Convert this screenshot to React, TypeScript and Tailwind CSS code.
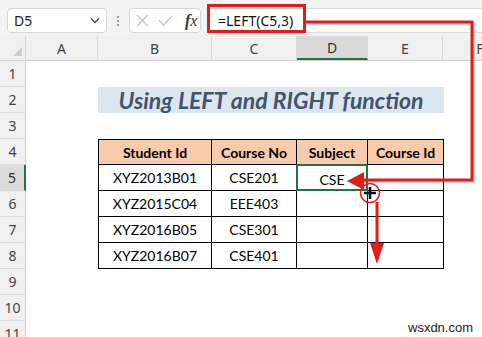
import React from "react";

const rows = [
  ["XYZ2013B01", "CSE201", "CSE", ""],
  ["XYZ2015C04", "EEE403", "", ""],
  ["XYZ2016B05", "CSE301", "", ""],
  ["XYZ2016B07", "CSE401", "", ""],
];

export default function App() {
  const ui = { fontFamily: '"Noto Sans", "Open Sans", sans-serif' };
  const cell = { fontFamily: 'Lato, "Liberation Sans", sans-serif' };
  return (
    <div className="relative w-[482px] h-[337px] overflow-hidden bg-white" style={ui}>
      {/* formula bar */}
      <div className="flex items-start h-[36px] bg-[#f3f3f3] pt-[8px] pl-[7px]">
        <div className="shrink-0 w-[100px] h-[25px] rounded-[4px] border border-[#d6d6d6] bg-white flex items-center justify-between pl-[6px] pr-[6px]">
          <span className="text-[14px] text-[#222] leading-none">D5</span>
          <svg width="10" height="7" viewBox="0 0 10 7">
            <path d="M1 1.5 L5 5.5 L9 1.5" fill="none" stroke="#444" strokeWidth="1.3" />
          </svg>
        </div>
        <div className="shrink-0 w-[22px] h-[25px] flex items-center justify-center">
          <svg width="4" height="12" viewBox="0 0 4 12">
            <circle cx="2" cy="2" r="1.1" fill="#8a8a8a" />
            <circle cx="2" cy="6" r="1.1" fill="#8a8a8a" />
            <circle cx="2" cy="10" r="1.1" fill="#8a8a8a" />
          </svg>
        </div>
        <div className="shrink-0 w-[72px] h-[25px] rounded-[4px] border border-[#d6d6d6] bg-white flex items-center pl-[6px] gap-[9px]">
          <svg width="13" height="13" viewBox="0 0 13 13">
            <path d="M1 1 L12 12 M12 1 L1 12" stroke="#c4c4c4" strokeWidth="1.2" />
          </svg>
          <svg width="15" height="11" viewBox="0 0 15 11">
            <path d="M1 5 L5.5 10 L14 1" fill="none" stroke="#c4c4c4" strokeWidth="1.2" />
          </svg>
          <span className="ml-[3px] text-[16px] italic text-[#333] leading-none" style={{ fontFamily: '"Liberation Serif", serif' }}>
            <b>f</b>x
          </span>
        </div>
        <div className="ml-[6px] flex-1 h-[25px] bg-white border-y border-[#dcdcdc] flex items-center pl-[11px]">
          <span className="text-[14px] text-[#111] leading-none">=LEFT(C5,3)</span>
        </div>
      </div>

      {/* column headers */}
      <div className="flex h-[25px] bg-[#f0f0f0] border-b border-[#cfcfcf]">
        <div className="shrink-0 w-[26px] h-full border-r border-[#d6d6d6] relative">
          <svg className="absolute right-[3px] bottom-[4px]" width="9" height="9" viewBox="0 0 9 9">
            <path d="M9 0 L9 9 L0 9 Z" fill="#cfcfcf" />
          </svg>
        </div>
        <div className="shrink-0 w-[72px] border-r border-[#dadada] flex items-center justify-center text-[14px] text-[#444]">A</div>
        <div className="shrink-0 w-[114px] border-r border-[#dadada] flex items-center justify-center text-[14px] text-[#444]">B</div>
        <div className="shrink-0 w-[85px] border-r border-[#dadada] flex items-center justify-center text-[14px] text-[#444]">C</div>
        <div className="shrink-0 w-[71px] border-r border-[#dadada] bg-[#d9d9d9] border-b-2 border-b-[#217346] flex items-center justify-center text-[14px] text-[#333]">D</div>
        <div className="shrink-0 w-[75px] border-r border-[#dadada] flex items-center justify-center text-[14px] text-[#444]">E</div>
        <div className="shrink-0 w-[74px] flex items-center justify-center text-[14px] text-[#444]">F</div>
      </div>

      {/* sheet */}
      <div className="flex">
        <div className="shrink-0 w-[26px] flex flex-col">
          {[1, 2, 3, 4, 5, 6, 7, 8, 9, 10, 11].map((n) => (
            <div
              key={n}
              className={
                n === 5
                  ? "h-[26px] bg-[#dcdcdc] border-r-2 border-[#217346] border-b border-b-[#d6d6d6] flex items-center justify-center text-[14px] text-[#333]"
                  : "h-[26px] bg-[#f0f0f0] border-r border-[#d0d0d0] border-b border-b-[#dadada] flex items-center justify-center text-[14px] text-[#444]"
              }
            >
              {n}
            </div>
          ))}
        </div>
        <div className="flex-1 flex flex-col" style={cell}>
          <div className="h-[26px]" />
          <div className="h-[26px] flex">
            <div className="shrink-0 w-[72px]" />
            <div className="shrink-0 w-[346px] h-[26px] bg-[#dce6f1] flex items-center justify-center text-[23px] font-bold italic text-[#44546a] leading-none">
              Using LEFT and RIGHT function
            </div>
          </div>
          <div className="h-[26px]" />
          <div className="flex">
            <div className="shrink-0 w-[72px]" />
            <div className="flex flex-col border-l border-t border-black">
              <div className="flex h-[25px] bg-[#f8cbad] text-[14px] font-bold text-black">
                <div className="shrink-0 w-[113px] border-r border-b border-black flex items-center justify-center">Student Id</div>
                <div className="shrink-0 w-[85px] border-r border-b border-black flex items-center justify-center">Course No</div>
                <div className="shrink-0 w-[71px] border-r border-b border-black flex items-center justify-center">Subject</div>
                <div className="shrink-0 w-[76px] border-r border-b border-black flex items-center justify-center">Course Id</div>
              </div>
              {rows.map((r, i) => (
                <div key={i} className="flex h-[26px] text-[14px] text-black">
                  <div className="shrink-0 w-[113px] border-r border-b border-black flex items-center justify-center">{r[0]}</div>
                  <div className="shrink-0 w-[85px] border-r border-b border-black flex items-center justify-center">{r[1]}</div>
                  <div className="shrink-0 w-[71px] border-r border-b border-black flex items-center justify-center relative">
                    {i === 0 && (
                      <div className="absolute left-[-1px] top-[-1px] w-[72px] h-[27px] border-2 border-[#217346]" />
                    )}
                    <span className="relative top-[2px]">{r[2]}</span>
                  </div>
                  <div className="shrink-0 w-[76px] border-r border-b border-black flex items-center justify-center">{r[3]}</div>
                </div>
              ))}
            </div>
          </div>
        </div>
      </div>

      {/* annotations */}
      <svg className="absolute left-0 top-0" width="482" height="337" viewBox="0 0 482 337">
        <g opacity="0.25" transform="translate(1.5,1.5)">
          <path d="M306 22 H472 V180 H360" fill="none" stroke="#555" strokeWidth="3" />
        </g>
        <rect x="208.5" y="5.5" width="96" height="26" fill="none" stroke="#e41b1b" strokeWidth="3" />
        <path d="M306 22 H472 V180 H360" fill="none" stroke="#e41b1b" strokeWidth="3" />
        <polygon points="347,181 364,172 364,190" fill="#e41b1b" />
        <circle cx="370" cy="193" r="9.5" fill="none" stroke="#e41b1b" strokeWidth="1.6" />
        <path d="M370 187 V199 M364 193 H376" stroke="#111" strokeWidth="2.6" />
        <path d="M377 202 V246" stroke="#e41b1b" strokeWidth="3" />
        <polygon points="370,243 384,243 377,264" fill="#e41b1b" />
      </svg>

      <div
        className="absolute left-[408px] top-[318px] text-[13px] text-[#222]"
        style={{ fontFamily: '"Liberation Sans", Arial, sans-serif' }}
      >
        wsxdn.com
      </div>
    </div>
  );
}
